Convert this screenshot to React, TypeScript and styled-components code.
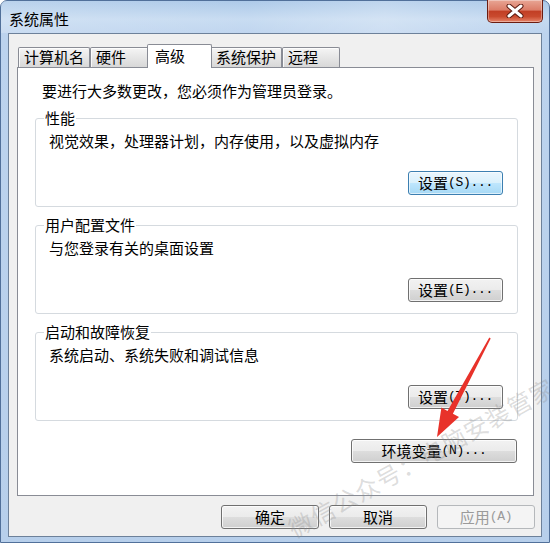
import styled, { createGlobalStyle, css } from "styled-components";

const FONT = `"Noto Sans CJK SC", "Noto Sans", sans-serif`;

const GlobalStyle = createGlobalStyle`
  html, body {
    margin: 0;
    padding: 0;
  }
  body {
    width: 550px;
    height: 543px;
    overflow: hidden;
    background: #fff;
    font-family: ${FONT};
  }
`;

const Stage = styled.div`
  position: relative;
  width: 550px;
  height: 543px;
  overflow: hidden;
`;

const Window = styled.div`
  box-sizing: border-box;
  width: 550px;
  height: 543px;
  display: flex;
  flex-direction: column;
  font-family: ${FONT};
  font-size: 15px;
  color: #000;
  border: 1px solid #51709a;
  border-radius: 7px 7px 0 0;
  background: linear-gradient(
    180deg,
    #a9c7e8 0px,
    #c5daf1 18px,
    #bcd3ee 33px,
    #b7cfeb 100%
  );
`;

const TitleBar = styled.div`
  height: 32px;
  display: flex;
  align-items: flex-start;
  flex-shrink: 0;
  background: linear-gradient(
    90deg,
    rgba(255, 255, 255, 0.2) 0%,
    rgba(255, 255, 255, 0.05) 45%,
    rgba(255, 255, 255, 0.25) 70%,
    rgba(255, 255, 255, 0) 100%
  );
`;

const Title = styled.div`
  margin: 8px 0 0 8px;
  line-height: 20px;
`;

const CloseButton = styled.div`
  box-sizing: border-box;
  margin: -1px 6px 0 auto;
  width: 56px;
  height: 23px;
  display: flex;
  align-items: center;
  justify-content: center;
  border: 1px solid #6c1c10;
  border-top: none;
  border-radius: 0 0 5px 5px;
  background: linear-gradient(
    180deg,
    #e8a695 0%,
    #dc7d68 45%,
    #c23f25 52%,
    #c94a2e 75%,
    #e7856a 100%
  );
  box-shadow: inset 0 0 0 1px rgba(255, 255, 255, 0.35);
`;

const Client = styled.div`
  flex: 1;
  display: flex;
  flex-direction: column;
  margin: 0 7px 5px 7px;
  padding: 10px 7px 0 8px;
  background: #f0f0f0;
  border: 1px solid #6d819a;
`;

const TabRow = styled.div`
  display: flex;
  align-items: flex-end;
  height: 23px;
  padding-left: 1px;
  position: relative;
  z-index: 2;
`;

const Tab = styled.div<{ $w: number; $active?: boolean }>`
  box-sizing: border-box;
  width: ${({ $w }) => $w}px;
  height: 20px;
  padding-left: 5px;
  line-height: 18px;
  white-space: nowrap;
  border: 1px solid #898c95;
  border-bottom: none;
  border-radius: 2px 2px 0 0;
  background: linear-gradient(180deg, #f5f5f5 0%, #e6e6e6 50%, #d8d8d8 100%);
  box-shadow: inset 1px 1px 0 rgba(255, 255, 255, 0.8);

  ${({ $active, $w }) =>
    $active &&
    css`
      width: ${$w + 4}px;
      height: 24px;
      margin: 0 -2px -1px;
      padding: 1px 0 0 7px;
      line-height: 20px;
      background: #fff;
      box-shadow: none;
      position: relative;
      z-index: 3;
    `}
`;

const Panel = styled.div`
  box-sizing: border-box;
  height: 429px;
  display: flex;
  flex-direction: column;
  padding: 13px 15px 0 17px;
  background: #fff;
  border: 1px solid #898c95;
`;

const Intro = styled.div`
  padding-left: 7px;
  line-height: 20px;
  margin-bottom: 7px;
`;

const Group = styled.fieldset<{ $first?: boolean }>`
  margin: ${({ $first }) => ($first ? 0 : 8)}px 0 0 0;
  padding: 0 14px 11px 8px;
  min-width: 0;
  border: 1px solid #d5dadf;
  border-radius: 3px;
`;

const Legend = styled.legend`
  padding: 0 1px;
  line-height: 20px;
`;

const Desc = styled.div`
  margin-top: 3px;
  padding-left: 5px;
  line-height: 20px;
`;

const ActionRow = styled.div<{ $top: number }>`
  display: flex;
  justify-content: flex-end;
  margin-top: ${({ $top }) => $top}px;
`;

const Button = styled.div<{ $w: number; $variant?: "focus" | "disabled" }>`
  box-sizing: border-box;
  width: ${({ $w }) => $w}px;
  height: 24px;
  display: flex;
  align-items: center;
  justify-content: center;
  line-height: 22px;
  white-space: nowrap;
  border: 1px solid #707070;
  border-radius: 3px;
  background: linear-gradient(
    180deg,
    #f2f2f2 0%,
    #ebebeb 50%,
    #dddddd 51%,
    #cfcfcf 100%
  );
  box-shadow: inset 0 0 0 1px rgba(255, 255, 255, 0.75);

  ${({ $variant }) =>
    $variant === "focus" &&
    css`
      border-color: #3c7fb1;
      background: linear-gradient(
        180deg,
        #eaf6fd 0%,
        #d9f0fc 50%,
        #bee6fd 51%,
        #a7d9f5 100%
      );
      box-shadow: inset 0 0 0 1px rgba(255, 255, 255, 0.6);
    `}

  ${({ $variant }) =>
    $variant === "disabled" &&
    css`
      color: #9a9a9a;
      border-color: #b5b8bb;
      background: #f4f4f4;
      box-shadow: none;
    `}
`;

const Latin = styled.span`
  font-family: "Liberation Mono", "DejaVu Sans Mono", monospace;
  font-size: 13px;
  letter-spacing: -0.3px;
`;

const DialogButtons = styled.div`
  display: flex;
  justify-content: flex-end;
  gap: 10px;
  margin: 9px -1px 0 0;
`;

const Watermark = styled.div`
  position: absolute;
  left: 290px;
  top: 518px;
  line-height: 24px;
  font-family: ${FONT};
  font-size: 24px;
  letter-spacing: 1px;
  white-space: nowrap;
  color: rgba(140, 140, 140, 0.3);
  transform: rotate(-29deg);
  transform-origin: 0 50%;
  pointer-events: none;
`;

const Overlay = styled.svg`
  position: absolute;
  left: 0;
  top: 0;
  pointer-events: none;
`;

function CloseGlyph() {
  return (
    <svg width="18" height="14" viewBox="0 0 18 14">
      <path
        d="M3 2 L15 12 M15 2 L3 12"
        stroke="#5a1a10"
        strokeWidth="5"
        strokeLinecap="round"
      />
      <path
        d="M3 2 L15 12 M15 2 L3 12"
        stroke="#fff"
        strokeWidth="3"
        strokeLinecap="round"
      />
    </svg>
  );
}

const tabs = [
  { label: "计算机名", w: 72 },
  { label: "硬件", w: 59 },
  { label: "高级", w: 61, active: true },
  { label: "系统保护", w: 72 },
  { label: "远程", w: 58 },
];

const groups = [
  {
    title: "性能",
    desc: "视觉效果，处理器计划，内存使用，以及虚拟内存",
    key: "S",
    focus: true,
  },
  { title: "用户配置文件", desc: "与您登录有关的桌面设置", key: "E" },
  { title: "启动和故障恢复", desc: "系统启动、系统失败和调试信息", key: "T" },
];

export default function App() {
  return (
    <Stage>
      <GlobalStyle />
      <Window>
        <TitleBar>
          <Title>系统属性</Title>
          <CloseButton>
            <CloseGlyph />
          </CloseButton>
        </TitleBar>
        <Client>
          <TabRow>
            {tabs.map((t) => (
              <Tab key={t.label} $w={t.w} $active={t.active}>
                {t.label}
              </Tab>
            ))}
          </TabRow>
          <Panel>
            <Intro>要进行大多数更改，您必须作为管理员登录。</Intro>
            {groups.map((g, i) => (
              <Group key={g.title} $first={i === 0}>
                <Legend>{g.title}</Legend>
                <Desc>{g.desc}</Desc>
                <ActionRow $top={20}>
                  <Button $w={95} $variant={g.focus ? "focus" : undefined}>
                    设置<Latin>({g.key})...</Latin>
                  </Button>
                </ActionRow>
              </Group>
            ))}
            <ActionRow $top={18}>
              <Button $w={166} style={{ marginRight: 1 }}>
                环境变量<Latin>(N)...</Latin>
              </Button>
            </ActionRow>
          </Panel>
          <DialogButtons>
            <Button $w={98}>确定</Button>
            <Button $w={98}>取消</Button>
            <Button $w={98} $variant="disabled">
              应用<Latin>(A)</Latin>
            </Button>
          </DialogButtons>
        </Client>
      </Window>
      <Watermark>微信公众号：电脑安装管家</Watermark>
      <Overlay width="550" height="543" viewBox="0 0 550 543">
        <polygon
          points="489.3,337.6 490.7,338.4 452.9,413.7 459,417 437,437 441.4,407.6 447.5,410.9"
          fill="#e8322a"
        />
      </Overlay>
    </Stage>
  );
}
